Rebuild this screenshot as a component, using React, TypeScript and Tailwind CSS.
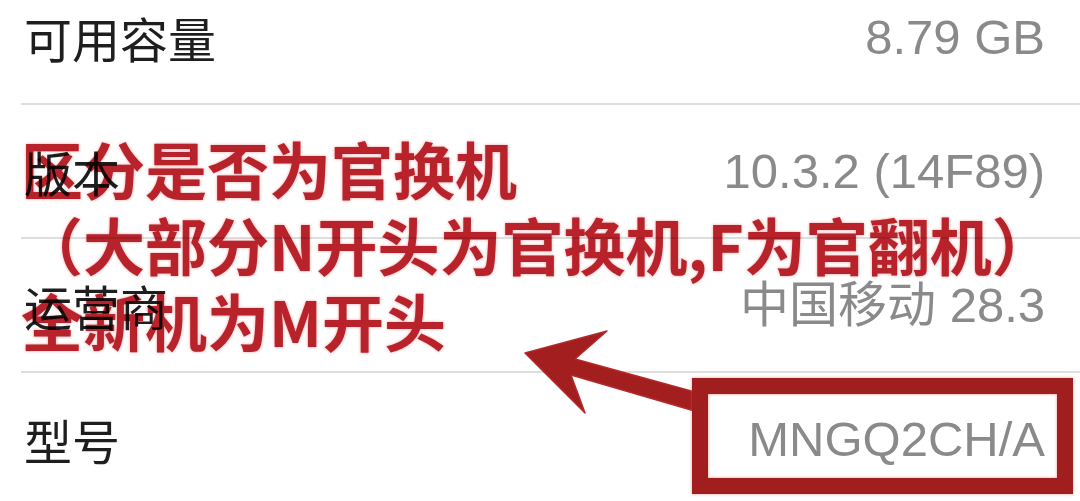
import React from "react";

type Row = { label: string; value: string };

const rows: Row[] = [
  { label: "可用容量", value: "8.79 GB" },
  { label: "版本", value: "10.3.2 (14F89)" },
  { label: "运营商", value: "中国移动 28.3" },
  { label: "型号", value: "MNGQ2CH/A" },
];

const labelFont = { fontFamily: '"Noto Sans CJK SC", "Noto Sans", sans-serif' };
const valueFont = { fontFamily: '"Liberation Sans", "Noto Sans CJK SC", sans-serif' };

function InfoRow({ row, last }: { row: Row; last: boolean }) {
  return (
    <div>
      <div className="flex h-[132px] items-center justify-between pl-[24px] pr-[35px]">
        <span className="text-[48px] leading-none text-[#1e1e1e]" style={labelFont}>
          {row.label}
        </span>
        <span className="text-[49px] leading-none text-[#8a8a8a]" style={valueFont}>
          {row.value}
        </span>
      </div>
      {!last && <div className="ml-[21px] h-[2px] bg-[#dedede]" />}
    </div>
  );
}

function Arrow() {
  return (
    <svg
      className="pointer-events-none absolute left-0 top-0"
      width={1080}
      height={501}
      viewBox="0 0 1080 501"
    >
      <polygon
        points="525,353 607,331 575,359 702,394 698,412 571,375 585,413"
        fill="#a31e1e"
        stroke="#b22a2a"
        strokeWidth={1.5}
        strokeLinejoin="round"
      />
    </svg>
  );
}

export default function App() {
  return (
    <div className="relative h-[501px] w-[1080px] overflow-hidden bg-white">
      <div className="mt-[-29px]">
        {rows.map((r, i) => (
          <InfoRow key={r.label} row={r} last={i === rows.length - 1} />
        ))}
      </div>

      {/* annotation text */}
      <div
        className="absolute left-[21px] top-[130px] text-[62px] font-bold leading-[76px] text-[#b8222a] mix-blend-multiply [text-shadow:0_0_3px_rgba(225,70,70,0.55)]"
        style={labelFont}
      >
        <div>区分是否为官换机</div>
        <div className="whitespace-nowrap">（大部分N开头为官换机,F为官翻机）</div>
        <div>全新机为M开头</div>
      </div>

      <Arrow />

      {/* highlight frame around the model number */}
      <div className="absolute left-[692px] top-[378px] h-[116px] w-[381px] border-[16px] border-[#a11e1e] shadow-[inset_0_0_3px_rgba(230,90,90,0.7),0_0_3px_rgba(230,90,90,0.6)]" />
    </div>
  );
}
